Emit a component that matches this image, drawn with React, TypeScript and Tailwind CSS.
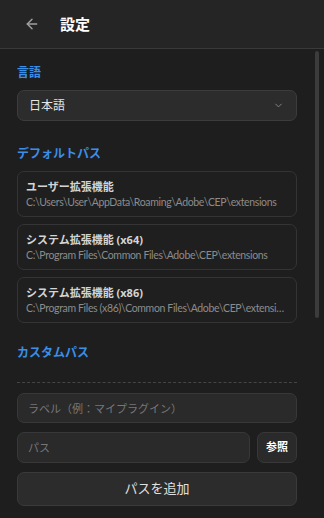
import { ArrowLeft, ChevronDown } from 'lucide-react'

const defaultPaths = [
  { title: 'ユーザー拡張機能', path: 'C:\\Users\\User\\AppData\\Roaming\\Adobe\\CEP\\extensions' },
  { title: 'システム拡張機能 (x64)', path: 'C:\\Program Files\\Common Files\\Adobe\\CEP\\extensions' },
  { title: 'システム拡張機能 (x86)', path: 'C:\\Program Files (x86)\\Common Files\\Adobe\\CEP\\extensions' },
]

function SectionLabel({ children }: { children: React.ReactNode }) {
  return <h2 className="text-[12px] leading-4 font-bold text-[#3b8eea] mb-[9px]">{children}</h2>
}

export default function App() {
  return (
    <div
      className="w-[324px] h-[518px] flex flex-col bg-[#1e1e1e] text-[#d4d4d4] overflow-hidden"
      style={{ fontFamily: '"Noto Sans", "Noto Sans CJK JP", sans-serif' }}
    >
      {/* ヘッダー */}
      <header className="h-[49px] shrink-0 flex items-center bg-[#252525] border-b border-[#3a3a3a]">
        <button type="button" className="ml-[24px] w-[16px] h-[16px] flex items-center justify-center text-[#a0a0a0]">
          <ArrowLeft size={16} strokeWidth={2.2} />
        </button>
        <h1 className="ml-[20px] text-[15px] font-bold text-white">設定</h1>
      </header>

      {/* 本文 + スクロールバー */}
      <div className="flex-1 min-h-0 flex">
        <div className="w-[314px] shrink-0 overflow-hidden">
          <div className="px-[17px] pt-[16px]">
            {/* 言語 */}
            <section>
              <SectionLabel>言語</SectionLabel>
              <div className="h-[31px] flex items-center justify-between rounded-[7px] bg-[#2c2c2c] border border-[#3c3c3c] pl-[11px] pr-[12px]">
                <span className="text-[12px] text-[#e6e6e6]">日本語</span>
                <ChevronDown size={11} strokeWidth={2} className="text-[#8a8a8a]" />
              </div>
            </section>

            {/* デフォルトパス */}
            <section className="mt-[25px]">
              <SectionLabel>デフォルトパス</SectionLabel>
              <div className="flex flex-col gap-[7px]">
                {defaultPaths.map((p) => (
                  <div key={p.title} className="h-[46px] rounded-[7px] border border-[#343434] bg-[#1f1f1f] px-[8px] pt-[7px]">
                    <div className="text-[11px] leading-4 font-bold text-[#d4d4d4]">{p.title}</div>
                    <div
                      className="text-[10.5px] leading-[14px] tracking-[-0.35px] text-[#8c8c8c] truncate"
                      style={{ fontFamily: 'Lato, "Noto Sans", sans-serif' }}
                    >
                      {p.path}
                    </div>
                  </div>
                ))}
              </div>
            </section>

            {/* カスタムパス */}
            <section className="mt-[22px]">
              <SectionLabel>カスタムパス</SectionLabel>
              <div className="mt-[21px] border-t border-dashed border-[#454545] pt-[10px] flex flex-col gap-[9px]">
                <input
                  className="h-[30px] w-full rounded-[7px] bg-[#2a2a2a] border border-[#383838] px-[10px] text-[11px] text-[#d4d4d4] placeholder:text-[#777] outline-none"
                  placeholder="ラベル（例：マイプラグイン）"
                />
                <div className="flex gap-[7px]">
                  <input
                    className="h-[31px] flex-1 min-w-0 rounded-[7px] bg-[#2a2a2a] border border-[#383838] px-[10px] text-[11px] text-[#d4d4d4] placeholder:text-[#777] outline-none"
                    placeholder="パス"
                  />
                  <button type="button" className="h-[31px] w-[40px] rounded-[7px] bg-[#2a2a2a] border border-[#383838] text-[11px] font-bold text-white">
                    参照
                  </button>
                </div>
                <button type="button" className="h-[34px] w-full rounded-[7px] bg-[#2c2c2c] border border-[#3a3a3a] text-[13px] text-[#e0e0e0]">
                  パスを追加
                </button>
              </div>
            </section>
          </div>
        </div>

        {/* スクロールバー */}
        <div className="w-[10px] shrink-0">
          <div className="ml-[1px] mt-[2px] w-[4px] h-[267px] rounded-[2px] bg-[#3c3c3c]" />
        </div>
      </div>
    </div>
  )
}
